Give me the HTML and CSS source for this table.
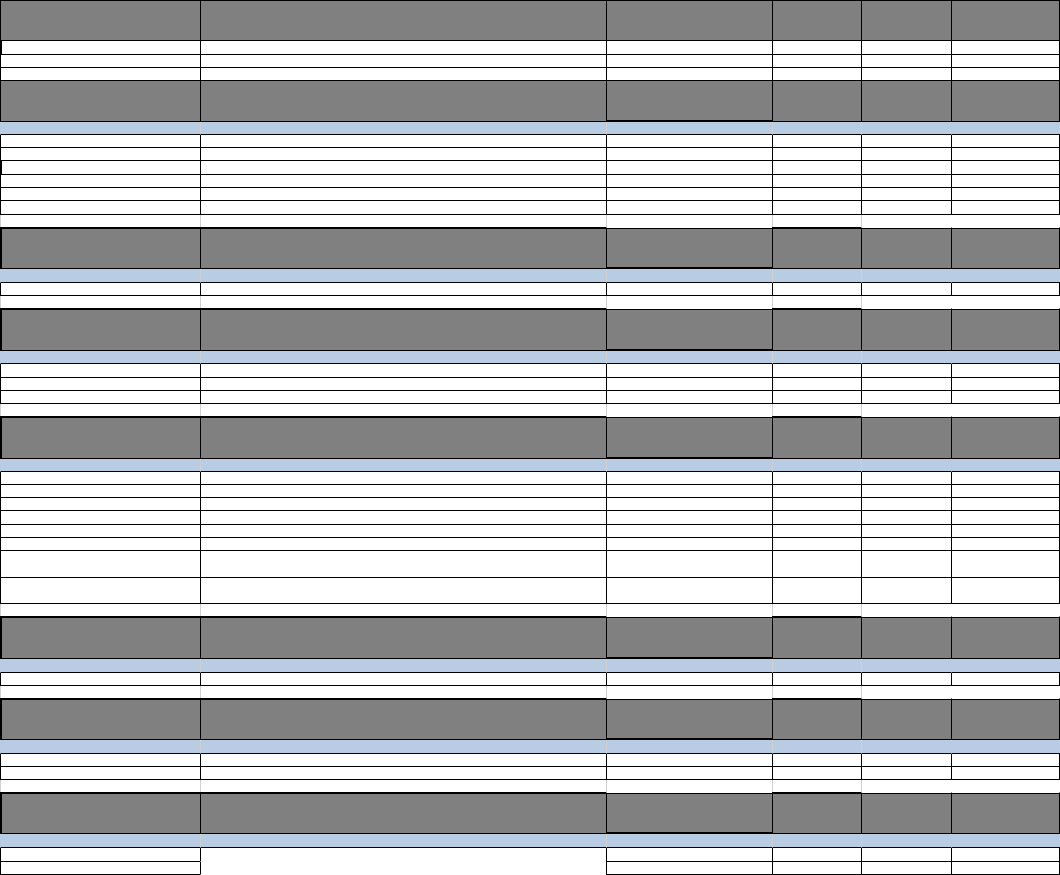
FILE: index.html
```html
<!DOCTYPE html>
<html>
<head>
<meta charset="utf-8">
<link rel="stylesheet" href="styles.css">
</head>
<body>
<div class="sheet">
  <div class="row h first x41"><div class="c"></div><div class="c"></div><div class="c"></div><div class="c"></div><div class="c"></div><div class="c"></div></div>
  <div class="row d x14"><div class="c tl"></div><div class="c"></div><div class="c"></div><div class="c"></div><div class="c"></div><div class="c"></div></div>
  <div class="row d x13"><div class="c"></div><div class="c"></div><div class="c"></div><div class="c"></div><div class="c"></div><div class="c"></div></div>
  <div class="row d x13"><div class="c"></div><div class="c"></div><div class="c"></div><div class="c"></div><div class="c"></div><div class="c"></div></div>

  <div class="row h x41"><div class="c"></div><div class="c"></div><div class="c"></div><div class="c"></div><div class="c"></div><div class="c"></div></div>
  <div class="row b x13"><div class="c"></div><div class="c"></div><div class="c"></div><div class="c"></div><div class="c"></div><div class="c"></div></div>
  <div class="row d x13"><div class="c"></div><div class="c"></div><div class="c"></div><div class="c"></div><div class="c"></div><div class="c"></div></div>
  <div class="row d x13"><div class="c"></div><div class="c"></div><div class="c"></div><div class="c"></div><div class="c"></div><div class="c"></div></div>
  <div class="row d x14"><div class="c tl"></div><div class="c"></div><div class="c"></div><div class="c"></div><div class="c"></div><div class="c"></div></div>
  <div class="row d x13"><div class="c"></div><div class="c"></div><div class="c"></div><div class="c"></div><div class="c"></div><div class="c"></div></div>
  <div class="row d x13"><div class="c"></div><div class="c"></div><div class="c"></div><div class="c"></div><div class="c"></div><div class="c"></div></div>
  <div class="row d x14"><div class="c"></div><div class="c"></div><div class="c"></div><div class="c"></div><div class="c"></div><div class="c"></div></div>
  <div class="row g x12"><div class="c"></div><div class="c"></div><div class="c"></div><div class="c"></div><div class="c"></div><div class="c"></div></div>

  <div class="row h tk x42"><div class="c"></div><div class="c"></div><div class="c"></div><div class="c"></div><div class="c"></div><div class="c"></div></div>
  <div class="row b x14"><div class="c"></div><div class="c"></div><div class="c"></div><div class="c"></div><div class="c"></div><div class="c"></div></div>
  <div class="row d x13"><div class="c"></div><div class="c"></div><div class="c"></div><div class="c"></div><div class="c"></div><div class="c"></div></div>
  <div class="row g x12"><div class="c"></div><div class="c"></div><div class="c"></div><div class="c"></div><div class="c"></div><div class="c"></div></div>

  <div class="row h tk x43"><div class="c"></div><div class="c"></div><div class="c"></div><div class="c"></div><div class="c"></div><div class="c"></div></div>
  <div class="row b x13"><div class="c"></div><div class="c"></div><div class="c"></div><div class="c"></div><div class="c"></div><div class="c"></div></div>
  <div class="row d x14"><div class="c"></div><div class="c"></div><div class="c"></div><div class="c"></div><div class="c"></div><div class="c"></div></div>
  <div class="row d x13"><div class="c"></div><div class="c"></div><div class="c"></div><div class="c"></div><div class="c"></div><div class="c"></div></div>
  <div class="row d x13"><div class="c"></div><div class="c"></div><div class="c"></div><div class="c"></div><div class="c"></div><div class="c"></div></div>
  <div class="row g x12"><div class="c"></div><div class="c"></div><div class="c"></div><div class="c"></div><div class="c"></div><div class="c"></div></div>

  <div class="row h tk x43"><div class="c"></div><div class="c"></div><div class="c"></div><div class="c"></div><div class="c"></div><div class="c"></div></div>
  <div class="row b x13"><div class="c"></div><div class="c"></div><div class="c"></div><div class="c"></div><div class="c"></div><div class="c"></div></div>
  <div class="row d x13"><div class="c"></div><div class="c"></div><div class="c"></div><div class="c"></div><div class="c"></div><div class="c"></div></div>
  <div class="row d x13"><div class="c"></div><div class="c"></div><div class="c"></div><div class="c"></div><div class="c"></div><div class="c"></div></div>
  <div class="row d x13"><div class="c"></div><div class="c"></div><div class="c"></div><div class="c"></div><div class="c"></div><div class="c"></div></div>
  <div class="row d x14"><div class="c"></div><div class="c"></div><div class="c"></div><div class="c"></div><div class="c"></div><div class="c"></div></div>
  <div class="row d x13"><div class="c"></div><div class="c"></div><div class="c"></div><div class="c"></div><div class="c"></div><div class="c"></div></div>
  <div class="row d x13"><div class="c"></div><div class="c"></div><div class="c"></div><div class="c"></div><div class="c"></div><div class="c"></div></div>
  <div class="row d x27"><div class="c"></div><div class="c"></div><div class="c"></div><div class="c"></div><div class="c"></div><div class="c"></div></div>
  <div class="row d x26"><div class="c"></div><div class="c"></div><div class="c"></div><div class="c"></div><div class="c"></div><div class="c"></div></div>
  <div class="row g x12"><div class="c"></div><div class="c"></div><div class="c"></div><div class="c"></div><div class="c"></div><div class="c"></div></div>

  <div class="row h tk x43"><div class="c"></div><div class="c"></div><div class="c"></div><div class="c"></div><div class="c"></div><div class="c"></div></div>
  <div class="row b x14"><div class="c"></div><div class="c"></div><div class="c"></div><div class="c"></div><div class="c"></div><div class="c"></div></div>
  <div class="row d x13"><div class="c"></div><div class="c"></div><div class="c"></div><div class="c"></div><div class="c"></div><div class="c"></div></div>
  <div class="row g x12"><div class="c"></div><div class="c"></div><div class="c"></div><div class="c"></div><div class="c"></div><div class="c"></div></div>

  <div class="row h tk x42"><div class="c"></div><div class="c"></div><div class="c"></div><div class="c"></div><div class="c"></div><div class="c"></div></div>
  <div class="row b x14"><div class="c"></div><div class="c"></div><div class="c"></div><div class="c"></div><div class="c"></div><div class="c"></div></div>
  <div class="row d x13"><div class="c"></div><div class="c"></div><div class="c"></div><div class="c"></div><div class="c"></div><div class="c"></div></div>
  <div class="row d x13"><div class="c"></div><div class="c"></div><div class="c"></div><div class="c"></div><div class="c"></div><div class="c"></div></div>
  <div class="row g x12"><div class="c"></div><div class="c"></div><div class="c"></div><div class="c"></div><div class="c"></div><div class="c"></div></div>

  <div class="row h tk x42"><div class="c"></div><div class="c"></div><div class="c"></div><div class="c"></div><div class="c"></div><div class="c"></div></div>
  <div class="row b x14"><div class="c"></div><div class="c"></div><div class="c"></div><div class="c"></div><div class="c"></div><div class="c"></div></div>
  <div class="row d x14"><div class="c"></div><div class="c nb"></div><div class="c"></div><div class="c"></div><div class="c"></div><div class="c"></div></div>
  <div class="row d x13"><div class="c"></div><div class="c nb"></div><div class="c"></div><div class="c"></div><div class="c"></div><div class="c"></div></div>
</div>
</body>
</html>
```

FILE: styles.css
```css
* {
  box-sizing: border-box;
  margin: 0;
  padding: 0;
}

html,
body {
  background: #ffffff;
}

body {
  margin: 0;
  width: 1060px;
  font-family: "Liberation Sans", Arial, sans-serif;
  overflow: hidden;
}

.sheet {
  display: flex;
  flex-direction: column;
  width: 1060px;
}

.row {
  display: grid;
  grid-template-columns: 200px 406px 166px 89px 90px 109px;
}

.x12 { height: 12px; }
.x13 { height: 13px; }
.x14 { height: 14px; }
.x26 { height: 26px; }
.x27 { height: 27px; }
.x41 { height: 41px; }
.x42 { height: 42px; }
.x43 { height: 43px; }

.row > .c {
  border-left: 1px solid #000000;
}

/* data rows */
.d > .c {
  background: #ffffff;
  border-bottom: 1px solid #000000;
}

.d > .c:last-child,
.h > .c:last-child {
  border-right: 1px solid #000000;
}

.d > .c.tl {
  border-left-width: 2px;
}

.d > .c.nb {
  border-bottom-color: #ffffff;
}

/* header rows */
.h > .c {
  background: #808080;
  border-bottom: 1px solid #000000;
}

.h > .c:nth-child(3) {
  border-bottom-width: 2px;
}

.h.first > .c {
  border-top: 1px solid #000000;
}

.h.first > .c:nth-child(3) {
  border-bottom-width: 1px;
}

.h.tk > .c {
  border-top: 1px solid #ffffff;
  box-shadow: inset 0 1px 0 #000000;
}

.h.tk > .c:nth-child(1),
.h.tk > .c:nth-child(2),
.h.tk > .c:nth-child(4) {
  border-top: 2px solid #000000;
  box-shadow: none;
}

.h.tk > .c:first-child {
  border-left-width: 2px;
}

/* light blue band rows */
.b > .c {
  background: #b8cce4;
  border-left-color: #d0d0d0;
  border-bottom: 1px solid #000000;
}

.b > .c:first-child {
  border-left-color: #b8cce4;
}

.b > .c:last-child {
  border-left-color: #b8cce4;
}

/* blank spacer rows with light gridlines */
.g > .c {
  background: #ffffff;
  border-left-color: #d0d0d0;
}

.g > .c:last-child {
  border-left-color: #ffffff;
}
```
